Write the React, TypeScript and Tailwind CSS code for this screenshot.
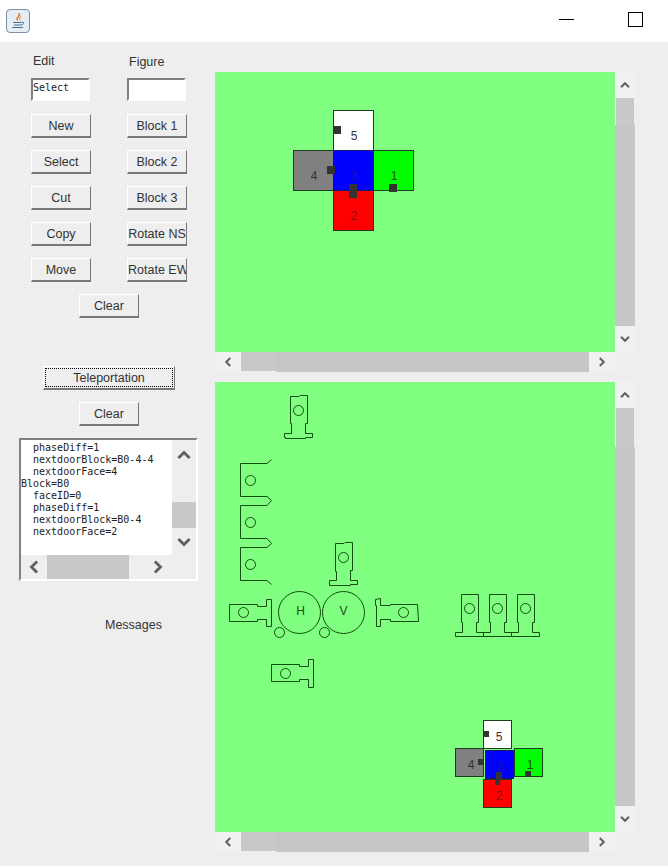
const sans = "font-['Liberation_Sans',Arial,sans-serif]";

function Chevron({ dir, size = 10 }: { dir: "up" | "down" | "left" | "right"; size?: number }) {
  const rot = { up: 0, down: 180, left: 270, right: 90 }[dir];
  return (
    <svg width={size} height={size} viewBox="0 0 10 10" style={{ transform: `rotate(${rot}deg)` }}>
      <path d="M1 7.2 L5 3.2 L9 7.2" fill="none" stroke="#606060" strokeWidth="2" />
    </svg>
  );
}

function Btn({ label, className = "w-[60px]" }: { label: string; className?: string }) {
  return (
    <button
      className={`${className} h-6 shrink-0 bg-[#eeeeee] border border-t-white border-l-white border-r-[#777777] border-b-2 border-b-[#777777] text-[12.5px] leading-none text-[#333333] whitespace-nowrap overflow-hidden px-0 pt-[2px] pb-0 ${sans}`}
    >
      {label}
    </button>
  );
}

function VScroll({ narrow, wide }: { narrow: number; wide: number }) {
  return (
    <div className="w-5 flex flex-col items-center bg-[#eeeeee]">
      <div className="h-[26px] w-5 bg-[#f1f1f1] flex items-center justify-center"><Chevron dir="up" /></div>
      <div className="w-[18px] bg-[#c8c8c8]" style={{ height: narrow }} />
      <div className="w-5 bg-[#c6c6c6]" style={{ height: wide }} />
      <div className="h-[26px] w-5 bg-[#f1f1f1] flex items-center justify-center"><Chevron dir="down" /></div>
    </div>
  );
}

function HScroll() {
  return (
    <div className="h-5 w-[400px] flex bg-[#eeeeee]">
      <div className="w-[26px] h-5 bg-[#f1f1f1] flex items-center justify-center"><Chevron dir="left" /></div>
      <div className="w-[35px] h-[19px] bg-[#c8c8c8]" />
      <div className="w-[313px] h-5 bg-[#c6c6c6]" />
      <div className="w-[26px] h-5 bg-[#f1f1f1] flex items-center justify-center"><Chevron dir="right" /></div>
    </div>
  );
}

const LINE = "#0f4f0f";

function Face({ x, y, s, fill, stroke = "#1c3c1c" }: { x: number; y: number; s: number; fill: string; stroke?: string }) {
  return <rect x={x} y={y} width={s} height={s} fill={fill} stroke={stroke} strokeWidth="1" shapeRendering="crispEdges" />;
}

function Digit({ x, y, c, fill }: { x: number; y: number; c: string; fill: string }) {
  return (
    <text x={x} y={y} textAnchor="middle" fontSize="12" fontFamily="Liberation Sans, Arial, sans-serif" fill={fill}>
      {c}
    </text>
  );
}

function Pad({ x, y, w, h }: { x: number; y: number; w: number; h: number }) {
  return <rect x={x} y={y} width={w} height={h} fill="#333333" />;
}

function TopCanvas() {
  return (
    <svg width="400" height="280" viewBox="215 72 400 280" className="block bg-[#80ff80]">
      <Face x={333.5} y={110.5} s={40} fill="#ffffff" />
      <Face x={293.5} y={150.5} s={40} fill="#808080" />
      <Face x={373.5} y={150.5} s={40} fill="#00ff00" />
      <Face x={333.5} y={190.5} s={40} fill="#ff0000" />
      <Face x={333.5} y={150.5} s={40} fill="#0000ff" stroke="#151566" />
      <Digit x={354} y={140} c="5" fill="#333333" />
      <Digit x={314} y={180} c="4" fill="#333333" />
      <Digit x={354} y={180} c="3" fill="#1a1a99" />
      <Digit x={394} y={180} c="1" fill="#115511" />
      <Digit x={354} y={220} c="2" fill="#881111" />
      <Pad x={334} y={126} w={7} h={8} />
      <Pad x={327} y={166} w={8} h={8} />
      <Pad x={389} y={184} w={8} h={8} />
      <Pad x={349} y={184} w={8} h={14} />
    </svg>
  );
}

const fixtures = [
  "M290.5 396.5H299L300 395.5H307.5V423.5H305.5V433.5H312.5V437.5H305.5V438.5H285.5V437.5H284.5V433.5H291.5V423.5H290.5Z",
  "M271.5 459.5L267 463.5H240.5V496.5H267L271.5 500.5L267 505.5H240.5V538.5H267L271.5 543.5L267 547.5H240.5V580.5H267L271.5 584.5",
  "M335.5 543.5H344L345 542.5H352.5V570.5H350.5V580.5H357.5V584.5H350.5V585.5H329.5V580.5H336.5V571.5H335.5Z",
  "M229.5 604.5H257.5V606.5H266.5V599.5H271.5V626.5H266.5V619.5H257.5V621.5H229.5Z",
  "M375.5 599.5L380.5 598.5V605.5H390.5V604.5H417.5L418.5 621.5H390.5V619.5H380.5V626.5H376.5V605.5H375.5Z",
  "M271.5 664.5H299.5V666.5H308.5V659.5H313.5V687.5H308.5V679.5H299.5V681.5H271.5Z",
  "M461.5 594.5H478.5V622.5H476.5V632.5H490.5V622.5H489.5V594.5H506.5V622.5H504.5V632.5H518.5V622.5H517.5V594.5H534.5V622.5H532.5V632.5H539.5V636.5H455.5V632.5H462.5V622.5H461.5Z",
  "M483.5 632.5V636.5M511.5 632.5V636.5",
];

const circles: [number, number, number][] = [
  [298.5, 410.5, 5],
  [250.5, 480.5, 5],
  [250.5, 522.5, 5],
  [250.5, 564.5, 5],
  [343.5, 557.5, 5],
  [299.5, 612.5, 21],
  [343.5, 612.5, 21],
  [279.5, 632.5, 5],
  [324.5, 632.5, 5],
  [243.5, 612.5, 5],
  [403.5, 612.5, 5],
  [285.5, 673.5, 5],
  [469.5, 608.5, 5],
  [497.5, 608.5, 5],
  [525.5, 608.5, 5],
];

function BottomCanvas() {
  return (
    <svg width="400" height="450" viewBox="215 382 400 450" className="block bg-[#80ff80]">
      {fixtures.map((d, i) => (
        <path key={i} d={d} fill="none" stroke={LINE} strokeWidth="1" />
      ))}
      {circles.map(([cx, cy, r], i) => (
        <circle key={i} cx={cx} cy={cy} r={r} fill="none" stroke={LINE} strokeWidth="1" />
      ))}
      <Digit x={300.5} y={615} c="H" fill="#1c4c1c" />
      <Digit x={343.5} y={615} c="V" fill="#1c4c1c" />
      <Face x={483.5} y={720.5} s={28} fill="#ffffff" />
      <Face x={455.5} y={748.5} s={28} fill="#808080" />
      <Face x={514.5} y={748.5} s={28} fill="#00ff00" />
      <Face x={485.5} y={750.5} s={28} fill="#0000ff" stroke="#151566" />
      <Face x={483.5} y={779.5} s={28} fill="#ff0000" />
      <Digit x={499} y={741} c="5" fill="#333333" />
      <Digit x={471} y={769} c="4" fill="#333333" />
      <Digit x={500} y={771} c="3" fill="#1a1a99" />
      <Digit x={530} y={769} c="1" fill="#115511" />
      <Digit x={499} y={800} c="2" fill="#881111" />
      <Pad x={484} y={731} w={5} h={6} />
      <Pad x={478} y={759} w={5} h={6} />
      <Pad x={525} y={771} w={6} h={5} />
      <Pad x={496} y={772} w={6} h={7} />
      <Pad x={495} y={779} w={5} h={6} />
    </svg>
  );
}

function JavaIcon() {
  return (
    <div className="w-6 h-6 rounded-[4px] border border-[#7a8ea6] bg-[#e6edf5] flex items-center justify-center">
      <svg width="18" height="18" viewBox="0 0 18 18">
        <path d="M10 1C12.5 4 7.5 5 8.5 8.5C6 6 10.5 4.5 10 1Z" fill="#e8762c" stroke="#e8762c" strokeWidth="1" />
        <path d="M12 4C10.5 5.5 10.5 7 11 8.5" fill="none" stroke="#e8a060" strokeWidth="1.2" />
        <path d="M4 10.5H13M5 13H12M3 15.5H14" fill="none" stroke="#4d6f92" strokeWidth="1.2" />
        <path d="M13 10C15.5 9.5 15.5 12.5 12 13" fill="none" stroke="#4d6f92" strokeWidth="1" />
      </svg>
    </div>
  );
}

const logLines = [
  "  phaseDiff=1",
  "  nextdoorBlock=B0-4-4",
  "  nextdoorFace=4",
  "Block=B0",
  "  faceID=0",
  "  phaseDiff=1",
  "  nextdoorBlock=B0-4",
  "  nextdoorFace=2",
];

function MessageBox() {
  return (
    <div className="w-[179px] h-[143px] ml-[19px] mt-3 border-2 border-t-[#808080] border-l-[#808080] border-r-white border-b-white bg-[#eeeeee] flex flex-col">
      <div className="flex h-[115px]">
        <div className="w-[151px] bg-white overflow-hidden pt-[2px] font-['DejaVu_Sans_Mono',monospace] text-[10px] leading-3 text-[#222222] whitespace-pre">
          {logLines.map((l, i) => (
            <div key={i} className="h-3">{l}</div>
          ))}
        </div>
        <div className="w-6 flex flex-col items-center">
          <div className="h-[62px] flex items-start justify-center pt-2"><Chevron dir="up" size={14} /></div>
          <div className="h-[26px] w-6 bg-[#c8c8c8]" />
          <div className="flex-1 flex items-center justify-center"><Chevron dir="down" size={14} /></div>
        </div>
      </div>
      <div className="h-6 flex">
        <div className="w-[26px] flex items-center justify-center"><Chevron dir="left" size={14} /></div>
        <div className="w-[82px] bg-[#c8c8c8]" />
        <div className="w-[36px] flex items-center justify-end"><Chevron dir="right" size={14} /></div>
      </div>
    </div>
  );
}

export default function App() {
  return (
    <div className={`w-[668px] h-[867px] bg-[#eeeeee] flex flex-col overflow-hidden ${sans}`}>
      <div className="h-[42px] shrink-0 bg-white flex items-center pl-[6px] pr-[25px]">
        <JavaIcon />
        <div className="ml-auto w-[15px] h-px bg-black mb-[4px]" />
        <div className="ml-[54px] w-[15px] h-[15px] border border-black mb-[3px]" />
      </div>

      <div className="flex flex-1">
        <div className="w-[215px] shrink-0 flex flex-col">
          <div className="flex pl-[31px] gap-9 mt-[11px] h-[25px] text-[12.5px] text-[#333333]">
            <div className="w-[60px] pl-[2px] leading-[14px] mt-px">Edit</div>
            <div className="w-[60px] pl-[2px] leading-[14px] mt-[2px]">Figure</div>
          </div>
          <div className="flex pl-[31px] gap-[37px] h-[23px]">
            <div className="w-[59px] h-[23px] bg-white border-2 border-t-[#808080] border-l-[#808080] border-r-white border-b-white pt-[2px] font-['DejaVu_Sans_Mono',monospace] text-[10px] leading-3 text-[#222222] overflow-hidden">
              Select
            </div>
            <div className="w-[59px] h-[23px] bg-white border-2 border-t-[#808080] border-l-[#808080] border-r-white border-b-white" />
          </div>
          <div className="grid grid-cols-[60px_60px] gap-x-9 gap-y-3 pl-[31px] mt-[13px]">
            <Btn label="New" />
            <Btn label="Block 1" />
            <Btn label="Select" />
            <Btn label="Block 2" />
            <Btn label="Cut" />
            <Btn label="Block 3" />
            <Btn label="Copy" />
            <Btn label="Rotate NS" />
            <Btn label="Move" />
            <Btn label="Rotate EW" />
          </div>
          <div className="flex pl-[79px] mt-3"><Btn label="Clear" /></div>
          <div className="flex pl-[43px] mt-12">
            <button className={`w-[132px] h-6 bg-[#eeeeee] border border-t-white border-l-white border-r-[#777777] border-b-2 border-b-[#777777] p-px text-[12.5px] text-[#333333] ${sans}`}>
              <span className="block h-full leading-[19px] border border-dotted border-black">Teleportation</span>
            </button>
          </div>
          <div className="flex pl-[79px] mt-3"><Btn label="Clear" /></div>
          <MessageBox />
          <div className="pl-[105px] mt-[37px] text-[12.5px] leading-[14px] text-[#333333]">Messages</div>
        </div>

        <div className="flex flex-col pt-[30px]">
          <div className="flex">
            <TopCanvas />
            <VScroll narrow={27} wide={201} />
          </div>
          <HScroll />
          <div className="flex mt-[10px]">
            <BottomCanvas />
            <VScroll narrow={39} wide={359} />
          </div>
          <HScroll />
        </div>
      </div>
      <div className="h-px shrink-0 bg-white" />
    </div>
  );
}
